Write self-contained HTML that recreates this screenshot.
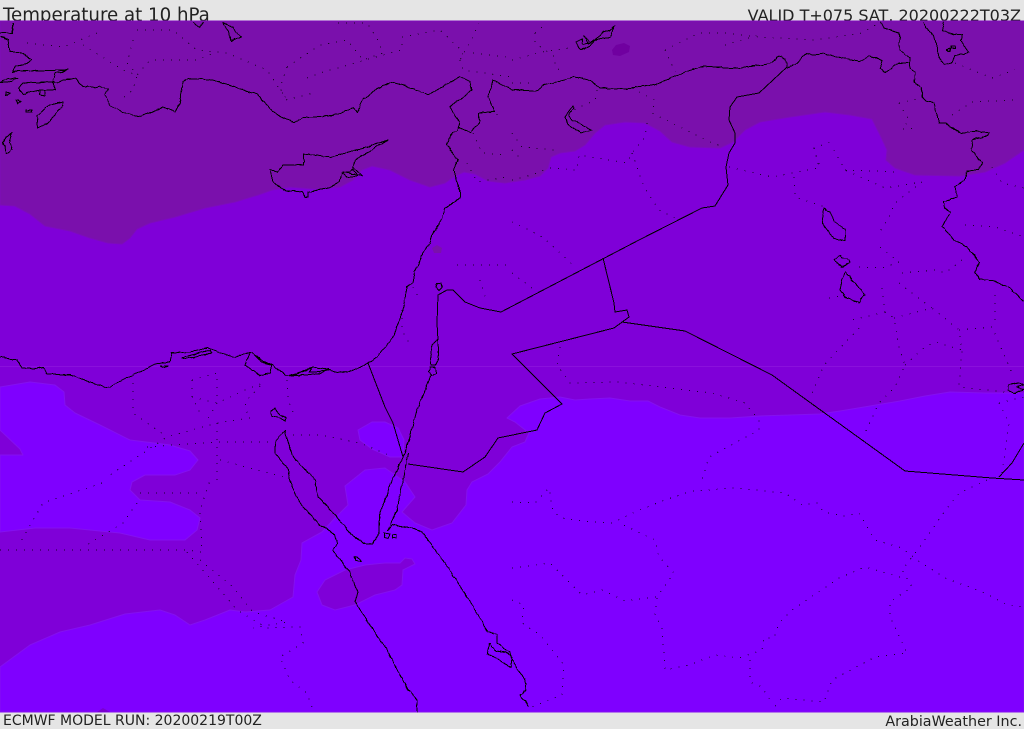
<!DOCTYPE html>
<html><head><meta charset="utf-8"><style>
html,body{margin:0;padding:0;background:#e5e5e5}
body{width:1024px;height:729px;overflow:hidden;position:relative;font-family:"DejaVu Sans",sans-serif;color:#222}
svg{position:absolute;left:0;top:0}
.c{fill:none;stroke:#000;stroke-width:1;stroke-linejoin:round}
.d{fill:none;stroke:#000;stroke-width:1;stroke-dasharray:1 7;opacity:.8}
text{font-family:"DejaVu Sans",sans-serif;fill:#222}
</style></head><body>
<svg width="1024" height="729" viewBox="0 0 1024 729">
<defs><filter id="j" x="0" y="0" width="1024" height="729" filterUnits="userSpaceOnUse" color-interpolation-filters="sRGB"><feTurbulence type="fractalNoise" baseFrequency="0.12" numOctaves="2" seed="4"/><feDisplacementMap in="SourceGraphic" scale="3.2" xChannelSelector="R" yChannelSelector="G"/></filter></defs>
<rect width="1024" height="729" fill="#e5e5e5"/>
<text x="3" y="21" font-size="18.2">Temperature at 10 hPa</text>
<text x="1021" y="21" font-size="16" text-anchor="end">VALID T+075 SAT, 20200222T03Z</text>
<text x="3" y="725" font-size="14">ECMWF MODEL RUN: 20200219T00Z</text>
<text x="1022" y="726" font-size="14.3" text-anchor="end">ArabiaWeather Inc.</text>
<rect x="0" y="21" width="1024" height="691" fill="#7f00d8"/>
<path fill="#7a10ac" stroke="#7d0cba" stroke-width="1" stroke-linejoin="round" d="M0,205 L15,206 L30,214 L45,226 L70,231 L90,238 L108,243 L122,244 L130,238 L137,229 L150,223 L175,217 L205,208 L235,202 L258,195 L272,190 L290,187 L315,189 L340,187 L353,180 L362,170 L372,166 L390,170 L410,180 L430,187 L445,183 L455,176 L464,172 L475,174 L488,181 L505,183 L525,180 L540,176 L548,168 L551,157 L560,153 L575,151 L585,145 L595,133 L605,125 L625,122 L645,123 L660,131 L672,142 L690,147 L720,148 L733,142 L745,130 L760,122 L790,117 L825,112 L850,115 L872,119 L880,135 L887,150 L886,160 L895,168 L915,175 L960,176 L985,172 L1005,163 L1024,150 L1024,21 L0,21 Z"/>
<path fill="#7f00ff" stroke="#8410f0" stroke-width="1" stroke-linejoin="round" d="M1024,393 L985,393 L950,392 L925,396 L900,401 L870,406 L840,411 L820,414 L790,415 L760,416 L730,418 L700,418 L680,415 L660,407 L648,401 L630,401 L610,398 L590,399 L575,400 L560,397 L540,399 L520,406 L507,418 L515,422 L529,433 L525,442 L512,447 L500,462 L488,474 L472,482 L467,490 L466,505 L452,523 L432,530 L415,523 L402,512 L415,497 L405,482 L385,468 L365,470 L345,486 L348,505 L335,518 L322,532 L302,543 L301,560 L295,575 L293,597 L270,610 L245,612 L230,610 L205,620 L190,625 L175,615 L160,610 L125,614 L90,625 L60,632 L30,645 L0,667 L0,712 L1024,712 Z"/>
<path fill="#7f00ff" stroke="#8410f0" stroke-width="1" stroke-linejoin="round" d="M0,387 L30,382 L55,385 L64,392 L65,405 L75,413 L100,425 L130,440 L170,445 L190,451 L198,460 L190,470 L175,475 L145,475 L132,482 L130,490 L140,500 L170,502 L190,510 L200,518 L197,530 L185,540 L150,540 L120,533 L70,528 L35,528 L0,532 L0,455 L23,455 L20,449 L0,430 Z"/>
<path fill="#7f00ff" stroke="#8410f0" stroke-width="1" stroke-linejoin="round" d="M358,430 L372,422 L385,422 L398,428 L404,440 L403,457 L390,457 L372,449 L360,440 Z"/>
<path fill="#7f00d8" stroke="#8410f0" stroke-width="1" stroke-linejoin="round" d="M317,592 L325,580 L345,570 L365,565 L385,563 L400,563 L405,558 L412,559 L415,564 L403,570 L402,585 L395,590 L375,595 L355,605 L335,610 L322,605 Z"/>
<path fill="#7000a0" d="M612,50 L616,45 L624,43 L630,46 L629,52 L620,56 L613,55 Z"/>
<path fill="#7a10ac" d="M432,248 L437,245 L442,248 L441,253 L434,253 Z"/>
<path fill="#7a00d0" d="M97,712 L103,708 L110,712 Z"/>
<rect x="0" y="366" width="1024" height="1" fill="#8a10dc"/>
<g class="d" shape-rendering="crispEdges">
<path d="M512,502 L535,503 L549,488 L553,512 L565,519 L592,522 L612,523 L635,512 L662,501 L692,491 L735,488 L785,493 L802,505 L817,503 L824,512 L844,516 L859,513 L875,540 L902,548 L917,560 L945,578 L985,593 L1005,604 L1022,607"/>
<path d="M987,480 L959,493 L942,515 L919,548 L902,570 L912,587 L890,602 L890,617 L907,653 L875,657 L832,680 L824,702 L782,698 L772,710"/>
<path d="M900,577 L865,567 L839,578 L792,610 L779,623 L774,638 L764,638 L762,650 L739,658 L715,655 L689,665 L665,670 L662,627 L655,615 L657,597 L674,573 L659,557 L655,540 L619,523"/>
<path d="M750,660 L750,682 L762,687 L772,703"/>
<path d="M512,568 L550,563 L574,587 L582,595 L602,590 L625,601 L657,597"/>
<path d="M512,600 L524,605 L522,623 L540,635 L564,665 L562,695 L532,707"/>
<path d="M0,550 L187,550 L202,552 L200,510 L210,480"/>
<path d="M140,493 L200,493"/><path d="M137,503 L123,523 L87,545"/>
<path d="M102,483 L43,503 L20,543"/>
<path d="M187,552 L220,590 L237,610 L267,628 L300,627 L303,643 L280,657 L290,680 L307,693 L313,710"/>
<path d="M200,560 L233,587 L253,612 L287,622 L253,628"/>
<path d="M293,435 L320,435 L360,443 L393,457"/>
<path d="M133,383 L133,413 L167,437"/>
<path d="M192,380 L192,397 L200,413"/><path d="M192,380 L217,373 L217,403 L207,420"/>
<path d="M192,397 L217,403 L245,390 L263,383 L245,402 L247,413"/><path d="M287,380 L288,400 L295,417"/>
<path d="M250,418 L217,423 L167,437 L107,477"/>
<path d="M147,447 L200,443 L217,442 L273,442"/>
<path d="M220,460 L287,478"/><path d="M217,423 L217,480"/>
<path d="M457,265 L507,265"/><path d="M480,280 L487,303"/>
<path d="M413,287 L420,300"/><path d="M402,310 L402,330 L410,345"/>
<path d="M27,43 L63,47 L97,33"/><path d="M83,45 L123,70 L137,75 L133,90 L120,100"/>
<path d="M137,30 L173,30 L197,50 L227,53 L267,70 L287,100 L313,93"/>
<path d="M133,40 L127,63 L137,75 L150,60 L197,60 L217,52"/>
<path d="M287,67 L280,88 L287,100"/>
<path d="M287,67 L320,45 L347,40 L363,60 L383,53 L378,40 L367,23 L333,23"/>
<path d="M307,78 L320,73 L383,55 L402,50 L402,37"/>
<path d="M402,37 L440,30 L463,52 L460,60 L473,37 L478,23"/>
<path d="M460,60 L463,70 L512,77"/><path d="M473,53 L507,57"/>
<path d="M473,133 L482,153 L507,155"/><path d="M493,107 L500,120"/><path d="M467,163 L477,182 L507,177"/>
<path d="M535,33 L542,27"/><path d="M512,60 L542,52 L569,48"/>
<path d="M535,33 L535,43 L555,57 L555,67 L562,72"/>
<path d="M665,50 L699,33 L725,33 L759,37 L815,40 L862,33 L879,23"/><path d="M665,50 L675,72"/><path d="M725,45 L759,35"/>
<path d="M512,83 L532,83"/><path d="M597,90 L595,100 L574,110"/>
<path d="M639,92 L655,100 L652,113 L712,143 L725,147"/>
<path d="M647,123 L645,137 L632,153 L627,163 L579,155 L577,170 L549,168 L532,175 L512,180"/>
<path d="M632,153 L644,187 L659,210 L679,220"/>
<path d="M512,133 L522,147 L555,150"/><path d="M512,150 L519,157"/>
<path d="M729,167 L772,177 L819,168 L814,148 L835,140"/><path d="M814,148 L820,167"/>
<path d="M794,177 L795,197 L825,207"/>
<path d="M834,150 L845,170 L885,188 L922,182 L895,203 L889,217 L879,233"/><path d="M845,170 L899,172"/>
<path d="M899,103 L922,98"/><path d="M899,103 L909,120 L902,129 L919,128"/>
<path d="M955,63 L992,78 L1015,70"/><path d="M952,115 L972,102 L1015,100"/>
<path d="M992,167 L1002,183 L1024,188"/><path d="M965,225 L995,227 L1024,237"/>
<path d="M512,222 L529,230 L544,238 L575,267"/><path d="M512,273 L532,288"/>
<path d="M560,347 L557,365 L570,383 L619,382 L712,393 L745,403 L759,420 L759,430 L709,457 L702,480"/>
<path d="M859,328 L824,365 L810,398"/><path d="M885,312 L852,320"/>
<path d="M882,288 L885,312 L894,318 L899,347 L905,365 L895,387 L879,403 L864,435"/>
<path d="M894,318 L932,308 L959,330 L962,350 L960,373 L959,387 L1005,392"/>
<path d="M905,365 L925,347 L935,342 L962,350"/>
<path d="M959,330 L992,327 L1005,357 L1012,373"/>
<path d="M902,273 L935,270 L945,273 L962,260"/>
<path d="M859,267 L882,268 L899,262 L875,243"/>
<path d="M899,283 L925,303 L932,308"/><path d="M995,295 L995,320"/>
<path d="M999,403 L1009,423 L1005,453 L1002,473"/><path d="M999,403 L1024,397"/>
<path d="M829,298 L845,295"/>
</g>
<g class="c" shape-rendering="crispEdges" filter="url(#j)">
<path d="M18,88 L23,83 L53,82 L57,83 L63,80 L75,79 L83,86 L95,88 L100,86 L108,89 L105,95 L110,105 L122,112 L132,115 L142,116 L163,107 L175,112 L180,103 L183,82 L188,78 L213,80 L233,86 L257,95 L265,102 L273,112 L285,119 L295,122 L303,118 L337,115 L353,108 L357,112 L363,100 L375,90 L390,82 L403,85 L428,95 L440,88 L460,77 L470,82 L472,90 L450,107 L460,123 L457,130 L452,132 L447,145 L458,160 L454,170 L460,193 L460,198 L445,208 L442,220 L433,233 L430,243 L423,253 L415,272 L413,283 L407,287 L403,310 L393,337 L377,357 L360,368 L338,373 L330,370 L313,367 L300,372 L287,376 L272,365 L263,361 L252,352 L233,357 L208,348 L190,352 L172,353 L170,362 L157,363 L143,370 L107,388 L93,383 L70,375 L47,374 L43,367 L33,369 L22,368 L17,360 L0,357"/>
<path d="M18,88 L23,94 L40,90 L55,90 L53,82"/>
<path d="M13,22 L12,33 L0,33"/><path d="M0,37 L8,40 L10,52 L18,52 L25,55 L31,60 L25,64 L15,66 L12,73 L18,71 L68,70 L55,73 L53,81"/>
<path d="M0,82 L8,78 L18,78 L8,82 Z"/><path d="M6,92 L10,93 L6,95 Z"/><path d="M16,100 L21,102 L18,104 Z"/><path d="M26,110 L32,110 L32,112 L26,112 Z"/>
<path d="M40,90 L44,90 L45,96 L40,95 Z"/>
<path d="M63,102 L50,105 L37,115 L38,128 L50,122 L63,105 Z"/>
<path d="M12,132 L3,143 L7,153 L12,150 L9,143 Z"/>
<path d="M223,23 L232,41 L241,37 L233,27 Z"/><path d="M193,22 L199,28 L203,22"/>
<path d="M388,140 L367,147 L347,153 L330,157 L304,154 L303,165 L283,165 L277,172 L270,170 L273,182 L283,190 L302,192 L305,197 L308,197 L308,192 L328,188 L340,182 L343,172 L363,176 L353,167 L355,160 Z"/>
<path d="M342,173 L350,172 L353,169 L358,176 L347,177 Z"/>
<path d="M458,127 L470,132 L479,123 L479,113 L495,112 L488,97 L493,80 L512,90 L535,91 L545,85 L574,77 L590,80 L600,88 L625,89 L655,85 L685,72 L704,66 L725,68 L742,68 L770,63 L779,56 L785,59 L787,67"/>
<path d="M787,67 L795,65 L807,53 L812,55 L824,53 L842,58 L860,61 L870,56 L882,60 L880,68 L885,73 L899,63 L909,63"/>
<path d="M881,22 L884,28 L899,33 L900,50 L910,58 L910,68 L915,72 L914,82 L922,88 L922,97 L927,102 L934,103 L939,123 L945,123 L960,133 L977,131 L989,133 L987,136 L972,140 L971,150 L982,163 L979,170 L967,171 L965,180 L955,187 L957,197 L944,202 L945,208 L950,212 L942,227 L954,240 L967,247 L980,263 L975,272 L979,279 L992,280 L1009,288 L1024,302"/>
<path d="M924,22 L925,28 L934,35 L939,57 L945,65 L952,63 L955,55 L969,53 L960,40 L962,35 L949,33 L942,30 L944,22"/>
<path d="M947,50 L950,48 L950,52 Z"/><path d="M951,46 L955,46 L955,48 L951,48 Z"/>
<path d="M576,42 L582,39 L583,45 L590,43 L584,36 L588,44 L600,36 L603,32 L610,31 L615,26 L610,37 L603,38 L595,40 L590,45 L581,50 L578,47 Z"/>
<path d="M573,106 L565,117 L567,123 L580,133 L592,130 L584,126 L572,120 L569,115 L574,108 Z"/>
<path d="M824,208 L822,223 L834,239 L845,241 L845,230 L835,222 L830,212 Z"/>
<path d="M840,255 L834,260 L842,267 L850,263 L849,260 L842,258 Z"/>
<path d="M846,272 L842,280 L840,290 L845,297 L859,302 L865,295 L862,290 L852,280 Z"/>
<path d="M1008,385 L1018,383 L1024,385 L1016,387 L1024,390 L1014,393 L1008,390 Z"/>
<path d="M437,283 L441,283 L442,288 L439,291 L436,288 Z"/>
<path d="M430,360 L432,345 L438,340 L438,360 L435,365 L431,365 Z"/>
<path d="M430,367 L435,367 L436,373 L432,376 L428,372 Z"/>
<path d="M431,376 L417,410 L409,440 L403,457 L393,478 L380,513 L380,532 L372,544 L363,543 L350,533 L337,517 L318,497 L315,480 L293,457 L285,432 L285,430 L275,443 L275,453 L288,470 L290,480 L300,503 L320,525 L335,535 L337,543 L333,550 L350,573 L358,592 L355,602 L387,650 L408,690 L417,700 L417,712"/>
<path d="M408,453 L403,480 L397,510 L388,530 L392,525 L413,528 L422,532 L450,570 L467,597 L488,632 L497,634 L497,643 L510,653 L512,660 L517,668 L525,680 L526,690 L520,695 L529,706"/>
<path d="M490,643 L487,653 L503,663 L510,667 L512,657 L505,652 L495,650 L490,643"/>
<path d="M384,533 L390,534 L388,538 L384,537 Z"/><path d="M392,535 L396,535 L396,538 L392,538 Z"/>
<path d="M354,557 L359,558 L361,561 L356,560 Z"/>
<path d="M271,411 L275,408 L280,414 L285,418 L285,421 L280,418 L272,416 Z"/>
<path d="M182,358 L195,354 L210,350 L211,353 L197,356 L185,359 Z"/>
<path d="M250,353 L245,365 L255,372 L260,376 L270,373 L271,365 L262,362 L255,355"/>
<path d="M290,376 L305,371 L313,367 L309,372 L315,372 L330,370 L318,374 L305,375 Z"/>
<path d="M160,366 L168,366 L163,368 Z"/>
</g>
<g class="c" shape-rendering="crispEdges">
<path d="M787,67 L759,93 L737,97 L730,107 L729,120 L735,133 L735,143 L729,153 L726,167 L728,185 L715,206 L702,208 L639,240 L501,312 L480,308 L465,302 L453,290 L447,290 L438,295 L437,323 L438,340"/>
<path d="M368,363 L385,407 L393,423 L403,457"/>
<path d="M408,464 L463,472 L485,457 L498,438 L537,430 L545,413 L562,404 L512,354 L614,328 L629,317 L627,310 L615,312 L614,303 L603,258"/>
<path d="M622,322 L685,331 L772,375 L905,471 L992,478 L1024,480"/>
<path d="M999,477 L1012,463 L1024,443"/>
</g>
</svg>
</body></html>
